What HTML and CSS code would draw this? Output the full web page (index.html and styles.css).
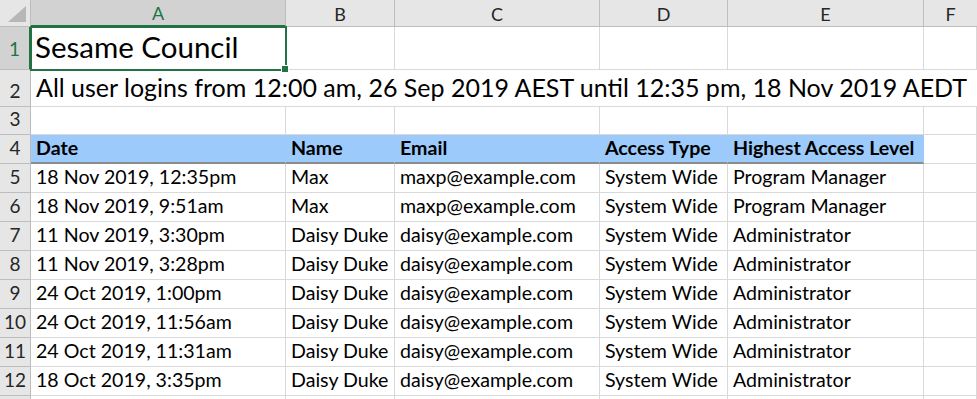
FILE: index.html
```html
<!DOCTYPE html>
<html>
<head>
<meta charset="utf-8">
<link rel="stylesheet" href="styles.css">
</head>
<body>
<div class="sheet">
  <div class="corner"><span class="tri"></span></div>
  <div class="ch sel">A</div>
  <div class="ch">B</div>
  <div class="ch">C</div>
  <div class="ch">D</div>
  <div class="ch">E</div>
  <div class="ch last">F</div>

  <div class="rh sel">1</div>
  <div class="c title active">Sesame Council<span class="handle"></span></div>
  <div class="c"></div><div class="c"></div><div class="c"></div><div class="c"></div><div class="c"></div>

  <div class="rh">2</div>
  <div class="c sub span">All user logins from 12:00 am, 26 Sep 2019 AEST until 12:35 pm, 18 Nov 2019 AEDT</div>

  <div class="rh">3</div>
  <div class="c"></div><div class="c"></div><div class="c"></div><div class="c"></div><div class="c"></div><div class="c"></div>

  <div class="rh">4</div>
  <div class="c hd">Date</div><div class="c hd">Name</div><div class="c hd">Email</div><div class="c hd">Access Type</div><div class="c hd">Highest Access Level</div><div class="c"></div>

  <div class="rh">5</div>
  <div class="c">18 Nov 2019, 12:35pm</div><div class="c">Max</div><div class="c">maxp@example.com</div><div class="c">System Wide</div><div class="c">Program Manager</div><div class="c"></div>

  <div class="rh">6</div>
  <div class="c">18 Nov 2019, 9:51am</div><div class="c">Max</div><div class="c">maxp@example.com</div><div class="c">System Wide</div><div class="c">Program Manager</div><div class="c"></div>

  <div class="rh">7</div>
  <div class="c">11 Nov 2019, 3:30pm</div><div class="c">Daisy Duke</div><div class="c">daisy@example.com</div><div class="c">System Wide</div><div class="c">Administrator</div><div class="c"></div>

  <div class="rh">8</div>
  <div class="c">11 Nov 2019, 3:28pm</div><div class="c">Daisy Duke</div><div class="c">daisy@example.com</div><div class="c">System Wide</div><div class="c">Administrator</div><div class="c"></div>

  <div class="rh">9</div>
  <div class="c">24 Oct 2019, 1:00pm</div><div class="c">Daisy Duke</div><div class="c">daisy@example.com</div><div class="c">System Wide</div><div class="c">Administrator</div><div class="c"></div>

  <div class="rh">10</div>
  <div class="c">24 Oct 2019, 11:56am</div><div class="c">Daisy Duke</div><div class="c">daisy@example.com</div><div class="c">System Wide</div><div class="c">Administrator</div><div class="c"></div>

  <div class="rh">11</div>
  <div class="c">24 Oct 2019, 11:31am</div><div class="c">Daisy Duke</div><div class="c">daisy@example.com</div><div class="c">System Wide</div><div class="c">Administrator</div><div class="c"></div>

  <div class="rh">12</div>
  <div class="c">18 Oct 2019, 3:35pm</div><div class="c">Daisy Duke</div><div class="c">daisy@example.com</div><div class="c">System Wide</div><div class="c">Administrator</div><div class="c"></div>

  <div class="rh"></div>
  <div class="c"></div><div class="c"></div><div class="c"></div><div class="c"></div><div class="c"></div><div class="c"></div>
</div>
</body>
</html>
```
FILE: styles.css
```css
html, body {
  margin: 0;
  padding: 0;
  background: #ffffff;
  overflow: hidden;
}
.sheet {
  display: grid;
  grid-template-columns: 31px 255px 109px 205px 128px 196px 1fr;
  grid-template-rows: 27px 43px 37px 28px repeat(10, 29px);
  width: 977px;
  font-family: Lato, "Open Sans", sans-serif;
  color: #000;
}
.sheet > div {
  box-sizing: border-box;
  min-width: 0;
}
.corner {
  position: relative;
  background: #e6e6e6;
  border-right: 1px solid #bdbdbd;
  border-bottom: 1px solid #bdbdbd;
}
.tri {
  position: absolute;
  right: 4px;
  bottom: 4px;
  width: 0;
  height: 0;
  border-left: 18px solid transparent;
  border-bottom: 16px solid #b7b7b7;
}
.ch {
  background: #e6e6e6;
  border-right: 1px solid #bdbdbd;
  border-bottom: 1px solid #bdbdbd;
  display: flex;
  align-items: center;
  justify-content: center;
  font-size: 18px;
  color: #262626;
  padding-top: 1px;
}
.ch.last {
  border-right: none;
}
.ch.sel {
  background: #d2d2d2;
  color: #217346;
  border-bottom: 2px solid #217346;
}
.rh {
  background: #e6e6e6;
  border-right: 1px solid #bdbdbd;
  border-bottom: 1px solid #bdbdbd;
  display: flex;
  align-items: flex-end;
  justify-content: center;
  padding-bottom: 4px;
  font-size: 19px;
  color: #262626;
}
.rh.sel {
  background: #d2d2d2;
  color: #217346;
  border-right: 2px solid #217346;
  padding-bottom: 9px;
}
.c {
  border-right: 1px solid #d9d9d9;
  border-bottom: 1px solid #d9d9d9;
  display: flex;
  align-items: flex-end;
  padding: 0 0 4px 5px;
  font-size: 19.6px;
  white-space: nowrap;
  overflow: hidden;
}
.c.title {
  position: relative;
  overflow: visible;
  font-size: 29.5px;
  padding-bottom: 5px;
  padding-left: 4px;
}
.active {
  outline: 2px solid #217346;
  outline-offset: -1px;
}
.handle {
  position: absolute;
  right: -4px;
  bottom: -4px;
  width: 6px;
  height: 6px;
  background: #217346;
  border: 1px solid #fff;
  z-index: 2;
}
.c.span {
  grid-column: 2 / span 6;
  border-right: none;
  font-size: 25px;
  padding-bottom: 4px;
  overflow: visible;
}
.c.hd {
  background: #9ccbfb;
  font-weight: 700;
  border-bottom: 2px solid #8c8c8c;
  border-right-color: #9ccbfb;
  padding-bottom: 3px;
}
```
